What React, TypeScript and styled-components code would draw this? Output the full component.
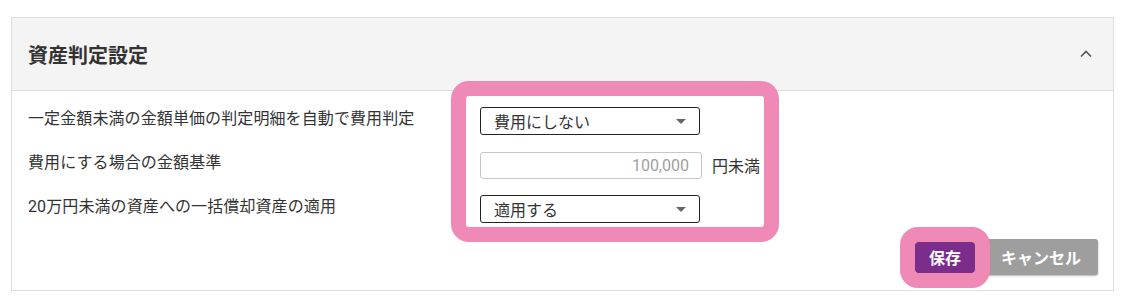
import { FC } from "react";
import styled, { createGlobalStyle } from "styled-components";

const GlobalStyle = createGlobalStyle`
    body {
        margin: 0;
        background: #ffffff;
        font-family: Roboto, "Noto Sans CJK JP", sans-serif;
        color: #333333;
    }
`;

const Page = styled.div`
    padding: 17px 14px 10px 11px;
`;

const Card = styled.section`
    border: 1px solid #dddddd;
    background: #ffffff;
`;

const CardHeader = styled.header`
    height: 72px;
    display: flex;
    align-items: center;
    justify-content: space-between;
    padding: 0 21px 0 16px;
    background: #f4f4f4;
    border-bottom: 1px solid #dddddd;
`;

const Title = styled.h2`
    margin: 0;
    font-size: 20px;
    font-weight: 700;
    color: #333333;
`;

const CollapseButton = styled.button`
    border: 0;
    background: none;
    padding: 0;
    display: flex;
    color: #555555;
`;

const CardBody = styled.div`
    padding: 16px 15px 15px 16px;
`;

const Fields = styled.div`
    display: grid;
    grid-template-columns: 452px auto;
    row-gap: 16px;
    position: relative;
`;

const Label = styled.div`
    height: 28px;
    display: flex;
    align-items: center;
    font-size: 16px;
    margin-top: -4px;
    letter-spacing: 0.1px;
`;

const Control = styled.div`
    height: 28px;
    display: flex;
    align-items: center;
    gap: 10px;
`;

const ControlColumn = styled.div`
    grid-column: 2;
    grid-row: 1 / span 3;
    position: relative;
    display: grid;
    row-gap: 16px;
    width: 280px;
`;

const Select = styled.div`
    box-sizing: border-box;
    width: 220px;
    height: 28px;
    border: 1px solid #222222;
    border-radius: 3px;
    display: flex;
    align-items: center;
    justify-content: space-between;
    padding: 0 13px 0 13px;
    font-size: 16px;
    color: #333333;
`;

const Caret = styled.span`
    width: 0;
    height: 0;
    border-left: 5px solid transparent;
    border-right: 5px solid transparent;
    border-top: 5px solid #666666;
`;

const AmountInput = styled.input`
    box-sizing: border-box;
    width: 222px;
    height: 27px;
    border: 1px solid #c8c8c8;
    border-radius: 3px;
    padding: 0 12px;
    text-align: right;
    font-family: Roboto, "Noto Sans CJK JP", sans-serif;
    font-size: 16px;
    color: #a0a0a0;
    background: #ffffff;
    outline: none;
`;

const Unit = styled.span`
    font-size: 16px;
`;

const Highlight = styled.div<{ $inset: string; $radius: number }>`
    position: absolute;
    inset: ${(p) => p.$inset};
    border: 15px solid #ef89b6;
    border-radius: ${(p) => p.$radius}px;
    pointer-events: none;
    z-index: 2;
`;

const Actions = styled.div`
    display: flex;
    justify-content: flex-end;
    align-items: center;
    gap: 9px;
    margin-top: 16px;
`;

const ButtonWrap = styled.div`
    position: relative;
    display: flex;
`;

const Button = styled.button<{ $variant: "primary" | "secondary" }>`
    border: 0;
    border-radius: 3px;
    font-family: Roboto, "Noto Sans CJK JP", sans-serif;
    font-size: 16px;
    font-weight: 700;
    color: #ffffff;
    height: ${(p) => (p.$variant === "primary" ? "31px" : "36px")};
    padding: ${(p) => (p.$variant === "primary" ? "0 14px" : "0 17px")};
    background: ${(p) => (p.$variant === "primary" ? "#7b2d8b" : "#9e9e9e")};
    box-shadow: ${(p) => (p.$variant === "primary" ? "none" : "0 1px 2px rgba(0,0,0,0.3)")};
`;

const App: FC = () => {
    return (
        <Page>
            <GlobalStyle />
            <Card>
                <CardHeader>
                    <Title>資産判定設定</Title>
                    <CollapseButton aria-label="折りたたむ">
                        <svg width="12" height="8" viewBox="0 0 12 8" fill="none">
                            <path d="M1 6.5 6 1.5 11 6.5" stroke="currentColor" strokeWidth="1.6" />
                        </svg>
                    </CollapseButton>
                </CardHeader>
                <CardBody>
                    <Fields>
                        <Label style={{ gridRow: 1 }}>一定金額未満の金額単価の判定明細を自動で費用判定</Label>
                        <Label style={{ gridRow: 2 }}>費用にする場合の金額基準</Label>
                        <Label style={{ gridRow: 3 }}>20万円未満の資産への一括償却資産の適用</Label>
                        <ControlColumn>
                            <Control>
                                <Select>
                                    費用にしない
                                    <Caret />
                                </Select>
                            </Control>
                            <Control>
                                <AmountInput defaultValue="100,000" />
                                <Unit>円未満</Unit>
                            </Control>
                            <Control>
                                <Select>
                                    適用する
                                    <Caret />
                                </Select>
                            </Control>
                            <Highlight $inset="-26px -19px -19px -29px" $radius={18} />
                        </ControlColumn>
                    </Fields>
                    <Actions>
                        <ButtonWrap>
                            <Button $variant="primary">保存</Button>
                            <Highlight $inset="-15px" $radius={18} />
                        </ButtonWrap>
                        <Button $variant="secondary">キャンセル</Button>
                    </Actions>
                </CardBody>
            </Card>
        </Page>
    );
};

export default App;
